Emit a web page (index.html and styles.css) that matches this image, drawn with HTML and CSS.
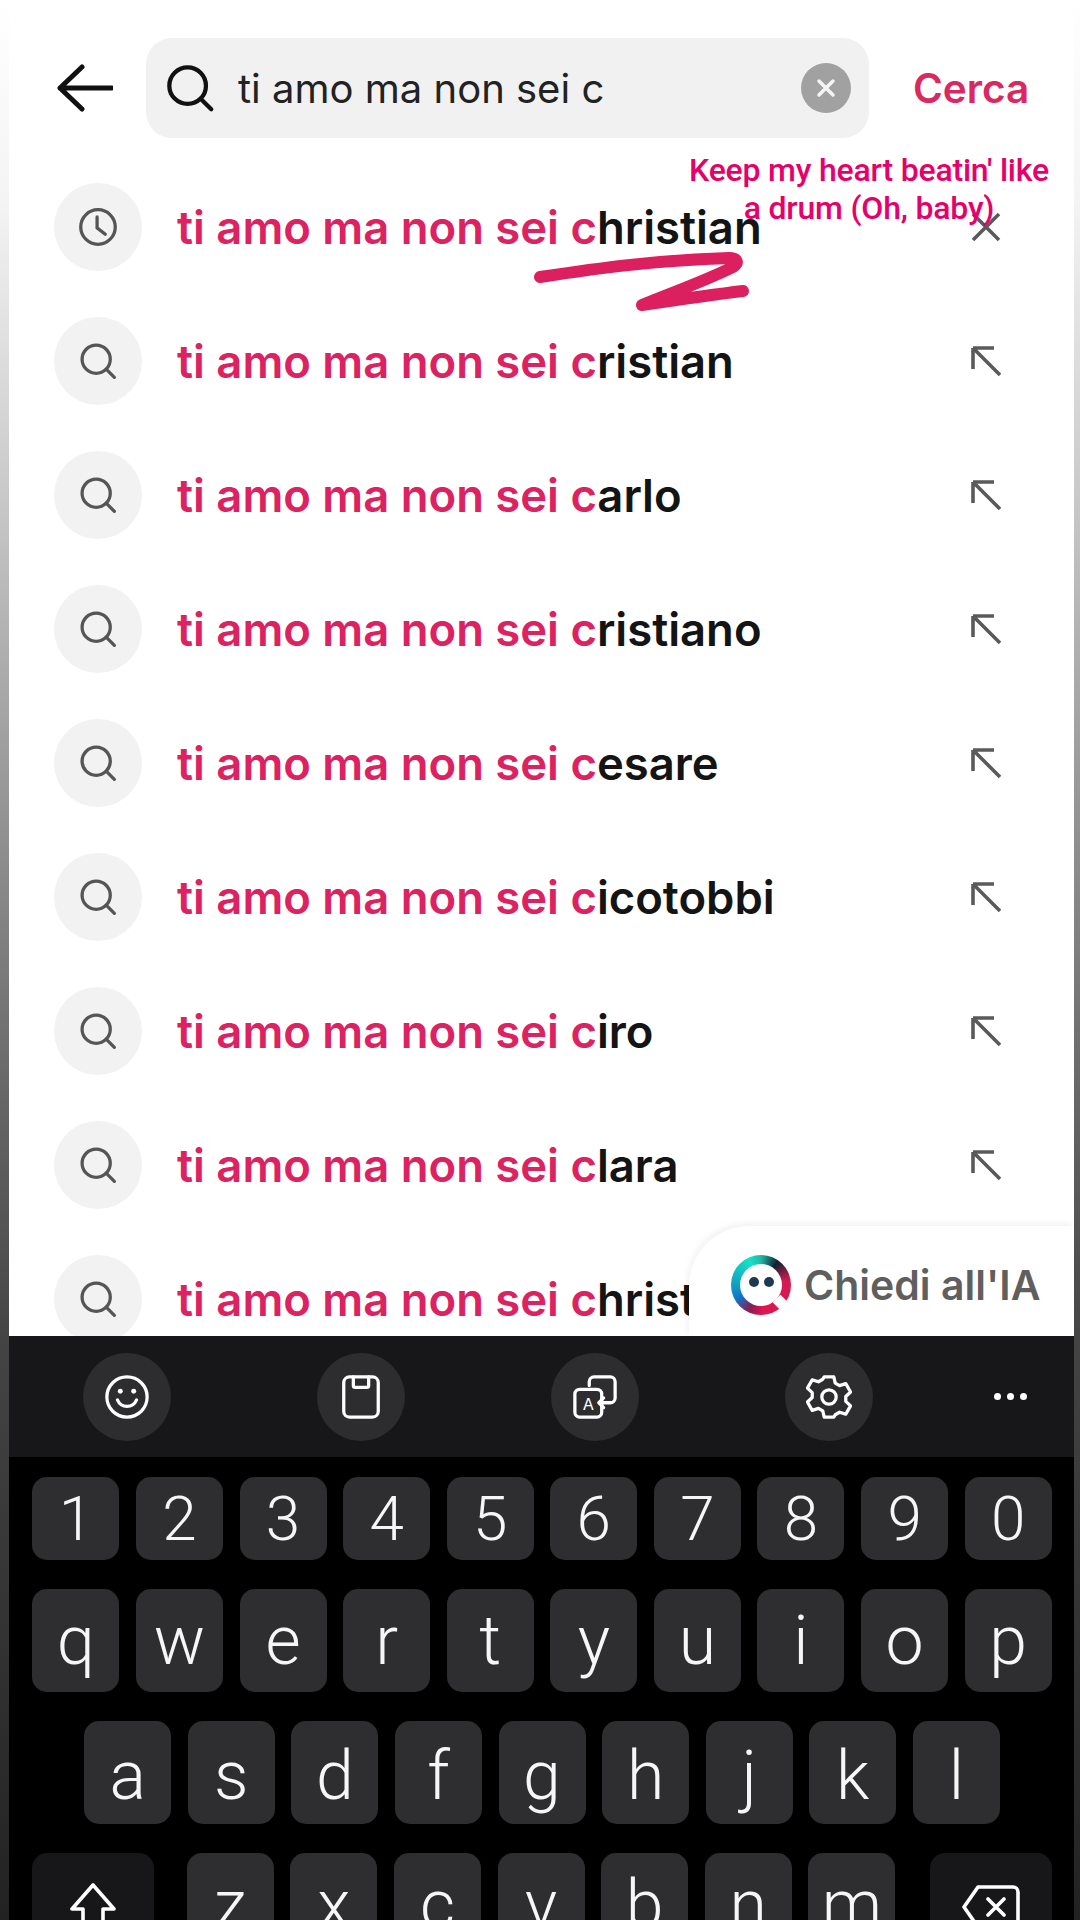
FILE: index.html
```html
<!DOCTYPE html>
<html lang="it">
<head>
    <meta charset="UTF-8">
    <title>Cerca</title>
    <link rel="stylesheet" href="styles.css">
</head>
<body>
    <svg class="defs" width="0" height="0">
        <symbol id="lente" viewBox="0 0 44 44">
            <circle cx="20" cy="20" r="15.5"/>
            <path d="M31 31l9 9"/>
        </symbol>
        <symbol id="freccia" viewBox="0 0 36 36">
            <path d="M5 5h21M5 5v21M5 5l27 27"/>
        </symbol>
    </svg>
    <div class="schermo">
        <div class="risultati">
            <header class="barra">
                <svg class="indietro" viewBox="0 0 56 48"><path d="M3 24h52M25 3L3 24l22 21"/></svg>
                <div class="ricerca">
                    <svg class="lente-grande"><use href="#lente"/></svg>
                    <span class="testo-ricerca">ti amo ma non sei c</span>
                    <span class="cancella"><svg viewBox="0 0 20 20"><path d="M3 3l14 14M17 3L3 17"/></svg></span>
                </div>
                <span class="cerca">Cerca</span>
            </header>

            <ul class="lista">
                <li class="riga">
                    <span class="tondo">
                        <svg class="icona" viewBox="0 0 44 44"><circle cx="22" cy="22" r="19"/><path d="M21 11v12l9 7"/></svg>
                    </span>
                    <span class="frase"><em>ti amo ma non sei c</em>hristian</span>
                    <svg class="azione chiudi" viewBox="0 0 30 30"><path d="M2 2l26 26M28 2L2 28"/></svg>
                </li>
                <li class="riga">
                    <span class="tondo"><svg class="icona"><use href="#lente"/></svg></span>
                    <span class="frase"><em>ti amo ma non sei c</em>ristian</span>
                    <svg class="azione"><use href="#freccia"/></svg>
                </li>
                <li class="riga">
                    <span class="tondo"><svg class="icona"><use href="#lente"/></svg></span>
                    <span class="frase"><em>ti amo ma non sei c</em>arlo</span>
                    <svg class="azione"><use href="#freccia"/></svg>
                </li>
                <li class="riga">
                    <span class="tondo"><svg class="icona"><use href="#lente"/></svg></span>
                    <span class="frase"><em>ti amo ma non sei c</em>ristiano</span>
                    <svg class="azione"><use href="#freccia"/></svg>
                </li>
                <li class="riga">
                    <span class="tondo"><svg class="icona"><use href="#lente"/></svg></span>
                    <span class="frase"><em>ti amo ma non sei c</em>esare</span>
                    <svg class="azione"><use href="#freccia"/></svg>
                </li>
                <li class="riga">
                    <span class="tondo"><svg class="icona"><use href="#lente"/></svg></span>
                    <span class="frase"><em>ti amo ma non sei c</em>icotobbi</span>
                    <svg class="azione"><use href="#freccia"/></svg>
                </li>
                <li class="riga">
                    <span class="tondo"><svg class="icona"><use href="#lente"/></svg></span>
                    <span class="frase"><em>ti amo ma non sei c</em>iro</span>
                    <svg class="azione"><use href="#freccia"/></svg>
                </li>
                <li class="riga">
                    <span class="tondo"><svg class="icona"><use href="#lente"/></svg></span>
                    <span class="frase"><em>ti amo ma non sei c</em>lara</span>
                    <svg class="azione"><use href="#freccia"/></svg>
                </li>
                <li class="riga">
                    <span class="tondo"><svg class="icona"><use href="#lente"/></svg></span>
                    <span class="frase"><em>ti amo ma non sei c</em>hristian</span>
                </li>
            </ul>

            <!-- sovrapposizioni del video -->
            <p class="canzone">Keep my heart beatin' like<br>a drum (Oh, baby)</p>
            <svg class="scarabocchio" viewBox="0 0 224 64"><path d="M11 27C70 18 130 10 200 8c9 0 10 5 4 9-28 14-62 26-91 38 34-5 68-10 101-14"/></svg>
            <div class="chiedi">
                <span class="logo"><i></i><i></i></span>
                <span>Chiedi all'IA</span>
            </div>
        </div>

        <div class="tastiera">
            <div class="strumenti">
                <span class="strumento">
                    <svg viewBox="0 0 48 48"><circle cx="24" cy="24" r="21"/><path d="M14 27c4 9 16 9 20 0"/><circle class="pieno" cx="17" cy="18" r="2.6"/><circle class="pieno" cx="31" cy="18" r="2.6"/></svg>
                </span>
                <span class="strumento">
                    <svg viewBox="0 0 48 48"><rect x="6" y="3" width="36" height="42" rx="6"/><path d="M16 3v9a2 2 0 0 0 2 2h12a2 2 0 0 0 2-2V3"/></svg>
                </span>
                <span class="strumento">
                    <svg viewBox="0 0 48 48"><path d="M18 12V8a5 5 0 0 1 5-5h17a5 5 0 0 1 5 5v17a5 5 0 0 1-5 5h-12l5-5M28 30l5 5"/><rect x="3" y="16" width="28" height="29" rx="5"/><text class="lettera" x="17" y="38">A</text></svg>
                </span>
                <span class="strumento">
                    <svg viewBox="0 0 48 48"><path d="M19 3h10l1.500 6.500 4.500 2.600 6.500-2 5 8.700-5 4.700v5l5 4.700-5 8.700-6.500-2-4.500 2.600L29 45H19l-1.500-6.500-4.500-2.600-6.500 2-5-8.700 5-4.700v-5l-5-4.700 5-8.700 6.500 2 4.500-2.600z"/><circle cx="24" cy="24" r="7.500"/></svg>
                </span>
                <span class="puntini"><i></i><i></i><i></i></span>
            </div>
            <div class="tasti">
                <div class="fila">
                    <span class="tasto">1</span><span class="tasto">2</span><span class="tasto">3</span><span class="tasto">4</span><span class="tasto">5</span><span class="tasto">6</span><span class="tasto">7</span><span class="tasto">8</span><span class="tasto">9</span><span class="tasto">0</span>
                </div>
                <div class="fila alta">
                    <span class="tasto">q</span><span class="tasto">w</span><span class="tasto">e</span><span class="tasto">r</span><span class="tasto">t</span><span class="tasto">y</span><span class="tasto">u</span><span class="tasto">i</span><span class="tasto">o</span><span class="tasto">p</span>
                </div>
                <div class="fila alta centrale">
                    <span class="tasto">a</span><span class="tasto">s</span><span class="tasto">d</span><span class="tasto">f</span><span class="tasto">g</span><span class="tasto">h</span><span class="tasto">j</span><span class="tasto">k</span><span class="tasto">l</span>
                </div>
                <div class="fila alta">
                    <span class="tasto speciale maiuscole">
                        <svg viewBox="0 0 48 56"><path d="M24 3L3 27h11v26h20V27h11z"/></svg>
                    </span>
                    <span class="tasto">z</span><span class="tasto">x</span><span class="tasto">c</span><span class="tasto">v</span><span class="tasto">b</span><span class="tasto">n</span><span class="tasto">m</span>
                    <span class="tasto speciale cancella-tasto">
                        <svg viewBox="0 0 60 48"><path d="M17 4h35a5 5 0 0 1 5 5v30a5 5 0 0 1-5 5H17L3 24zM27 16l16 16M43 16L27 32"/></svg>
                    </span>
                </div>
            </div>
        </div>
    </div>
</body>
</html>
```

FILE: styles.css
```css
* {
    box-sizing: border-box;
}

html, body {
    margin: 0;
    padding: 0;
    height: 1920px;
    overflow: hidden;
}

body {
    font-family: Inter, "Liberation Sans", sans-serif;
    background: linear-gradient(to bottom, #ffffff 0, #f4f4f4 200px, #c8c8c8 500px, #969696 800px, #666 1100px, #444 1340px, #222 1920px);
}

.defs {
    position: absolute;
}

.schermo {
    height: 1920px;
    margin: 0 6px 0 9px;
    display: flex;
    flex-direction: column;
    overflow: hidden;
}

/* Parte bianca */
.risultati {
    position: relative;
    flex: none;
    height: 1336px;
    background: #fff;
    overflow: hidden;
}

.barra {
    display: flex;
    align-items: center;
    height: 100px;
    margin-top: 38px;
    padding-left: 48px;
}

.indietro {
    width: 56px;
    height: 48px;
    fill: none;
    stroke: #111;
    stroke-width: 5;
    stroke-linecap: round;
    stroke-linejoin: round;
}

.ricerca {
    display: flex;
    align-items: center;
    width: 723px;
    height: 100px;
    margin-left: 33px;
    padding: 0 18px 0 18px;
    background: #f1f1f2;
    border-radius: 26px;
}

.lente-grande {
    width: 52px;
    height: 52px;
    fill: none;
    stroke: #111;
    stroke-width: 3.6;
    stroke-linecap: round;
}

.testo-ricerca {
    flex: 1;
    margin-left: 22px;
    font-size: 40px;
    color: #222;
}

.cancella {
    display: flex;
    align-items: center;
    justify-content: center;
    width: 50px;
    height: 50px;
    background: #a1a1a1;
    border-radius: 50%;
}

.cancella svg {
    width: 20px;
    height: 20px;
    fill: none;
    stroke: #f4f4f4;
    stroke-width: 3.5;
    stroke-linecap: round;
}

.cerca {
    margin-left: 44px;
    font-size: 40.500px;
    font-weight: 600;
    color: #d9295f;
}

.lista {
    list-style: none;
    margin: 22px 0 0;
    padding: 0;
}

.riga {
    display: flex;
    align-items: center;
    height: 134px;
    padding-left: 45px;
}

.tondo {
    display: flex;
    align-items: center;
    justify-content: center;
    flex: none;
    width: 88px;
    height: 88px;
    background: #f2f2f3;
    border-radius: 50%;
}

.icona {
    width: 40px;
    height: 40px;
    fill: none;
    stroke: #555;
    stroke-width: 3.6;
    stroke-linecap: round;
    stroke-linejoin: round;
}

.frase {
    margin-left: 35px;
    font-size: 45.400px;
    font-weight: 600;
    color: #141414;
    white-space: nowrap;
}

.frase em {
    font-style: normal;
    color: #dc2260;
}

.azione {
    width: 36px;
    height: 36px;
    margin-left: auto;
    margin-right: 70px;
    fill: none;
    stroke: #5a5a5a;
    stroke-width: 3.6;
    flex: none;
}

.azione.chiudi {
    width: 30px;
    height: 30px;
    margin-right: 73px;
}

.canzone {
    position: absolute;
    top: 151px;
    left: 665px;
    width: 390px;
    margin: 0;
    font-family: Roboto, sans-serif;
    font-size: 32px;
    font-weight: 500;
    line-height: 38px;
    letter-spacing: -0.2px;
    text-align: center;
    color: #e5006a;
}

.scarabocchio {
    position: absolute;
    top: 250px;
    left: 520px;
    width: 224px;
    height: 64px;
    fill: none;
    stroke: #dc1f5e;
    stroke-width: 12;
    stroke-linecap: round;
    stroke-linejoin: round;
}

.chiedi {
    position: absolute;
    top: 1226px;
    right: 0;
    display: flex;
    align-items: center;
    width: 385px;
    height: 110px;
    padding: 8px 0 0 42px;
    gap: 13px;
    background: #fff;
    border-top-left-radius: 60px;
    box-shadow: -2px -3px 6px rgba(0, 0, 0, 0.05);
    font-size: 41px;
    font-weight: 600;
    color: #5f5f5f;
    white-space: nowrap;
}

.logo {
    position: relative;
    display: flex;
    align-items: center;
    justify-content: center;
    gap: 5px;
    flex: none;
    width: 60px;
    height: 60px;
    padding-bottom: 6px;
    border-radius: 50%;
    background: conic-gradient(#20b8a8 0deg, #123 35deg, #d41a50 80deg, #e01550 175deg, #8a1d50 205deg, #1273c8 240deg, #10a0c0 270deg, #18e0c8 335deg, #20b8a8 360deg);
}

.logo::before {
    content: "";
    position: absolute;
    inset: 9px;
    background: #fff;
    border-radius: 50%;
}

.logo::after {
    content: "";
    position: absolute;
    right: 5px;
    bottom: 7px;
    width: 11px;
    height: 11px;
    background: #fff;
    transform: rotate(45deg);
}

.logo i {
    position: relative;
    z-index: 1;
    width: 10px;
    height: 10px;
    background: #1d3a50;
    border-radius: 50%;
}

/* Tastiera */
.tastiera {
    flex: 1;
    background: #000;
}

.strumenti {
    display: flex;
    align-items: center;
    height: 121px;
    padding-left: 74px;
    background: #17171a;
}

.strumento {
    display: flex;
    align-items: center;
    justify-content: center;
    width: 88px;
    height: 88px;
    margin-right: 146px;
    background: #2d2d2f;
    border-radius: 50%;
}

.strumento svg {
    width: 46px;
    height: 46px;
    fill: none;
    stroke: #fff;
    stroke-width: 3.4;
    stroke-linecap: round;
    stroke-linejoin: round;
}

.strumento .pieno {
    fill: #fff;
    stroke: none;
}

.strumento .lettera {
    fill: #fff;
    stroke: none;
    font-size: 17px;
    text-anchor: middle;
}

.puntini {
    display: flex;
    gap: 6px;
    margin-left: -25px;
}

.puntini i {
    width: 7px;
    height: 7px;
    background: #fff;
    border-radius: 50%;
}

.tasti {
    display: flex;
    flex-direction: column;
    gap: 29px;
    padding-top: 20px;
}

.fila {
    display: flex;
    justify-content: center;
    gap: 16.6px;
    height: 83px;
    padding-left: 1px;
}

.fila.alta {
    height: 103px;
}

.tasto {
    display: flex;
    align-items: center;
    justify-content: center;
    width: 87px;
    background: #2e2e30;
    border-radius: 15px;
    font-family: Roboto, sans-serif;
    font-weight: 300;
    font-size: 62px;
    color: #f6f6f6;
}

.fila.alta .tasto {
    font-size: 68px;
}

.fila.centrale .tasto {
    padding-top: 6px;
}

.speciale {
    background: #17171a;
    width: 122px;
}

.maiuscole {
    margin-right: 16px;
}

.maiuscole svg {
    width: 48px;
    height: 56px;
    margin-top: 10px;
    fill: none;
    stroke: #fff;
    stroke-width: 3.6;
    stroke-linejoin: round;
}

.cancella-tasto {
    margin-left: 18px;
}

.cancella-tasto svg {
    width: 60px;
    height: 48px;
    margin-top: 4px;
    fill: none;
    stroke: #fff;
    stroke-width: 3.6;
    stroke-linecap: round;
    stroke-linejoin: round;
}
```
